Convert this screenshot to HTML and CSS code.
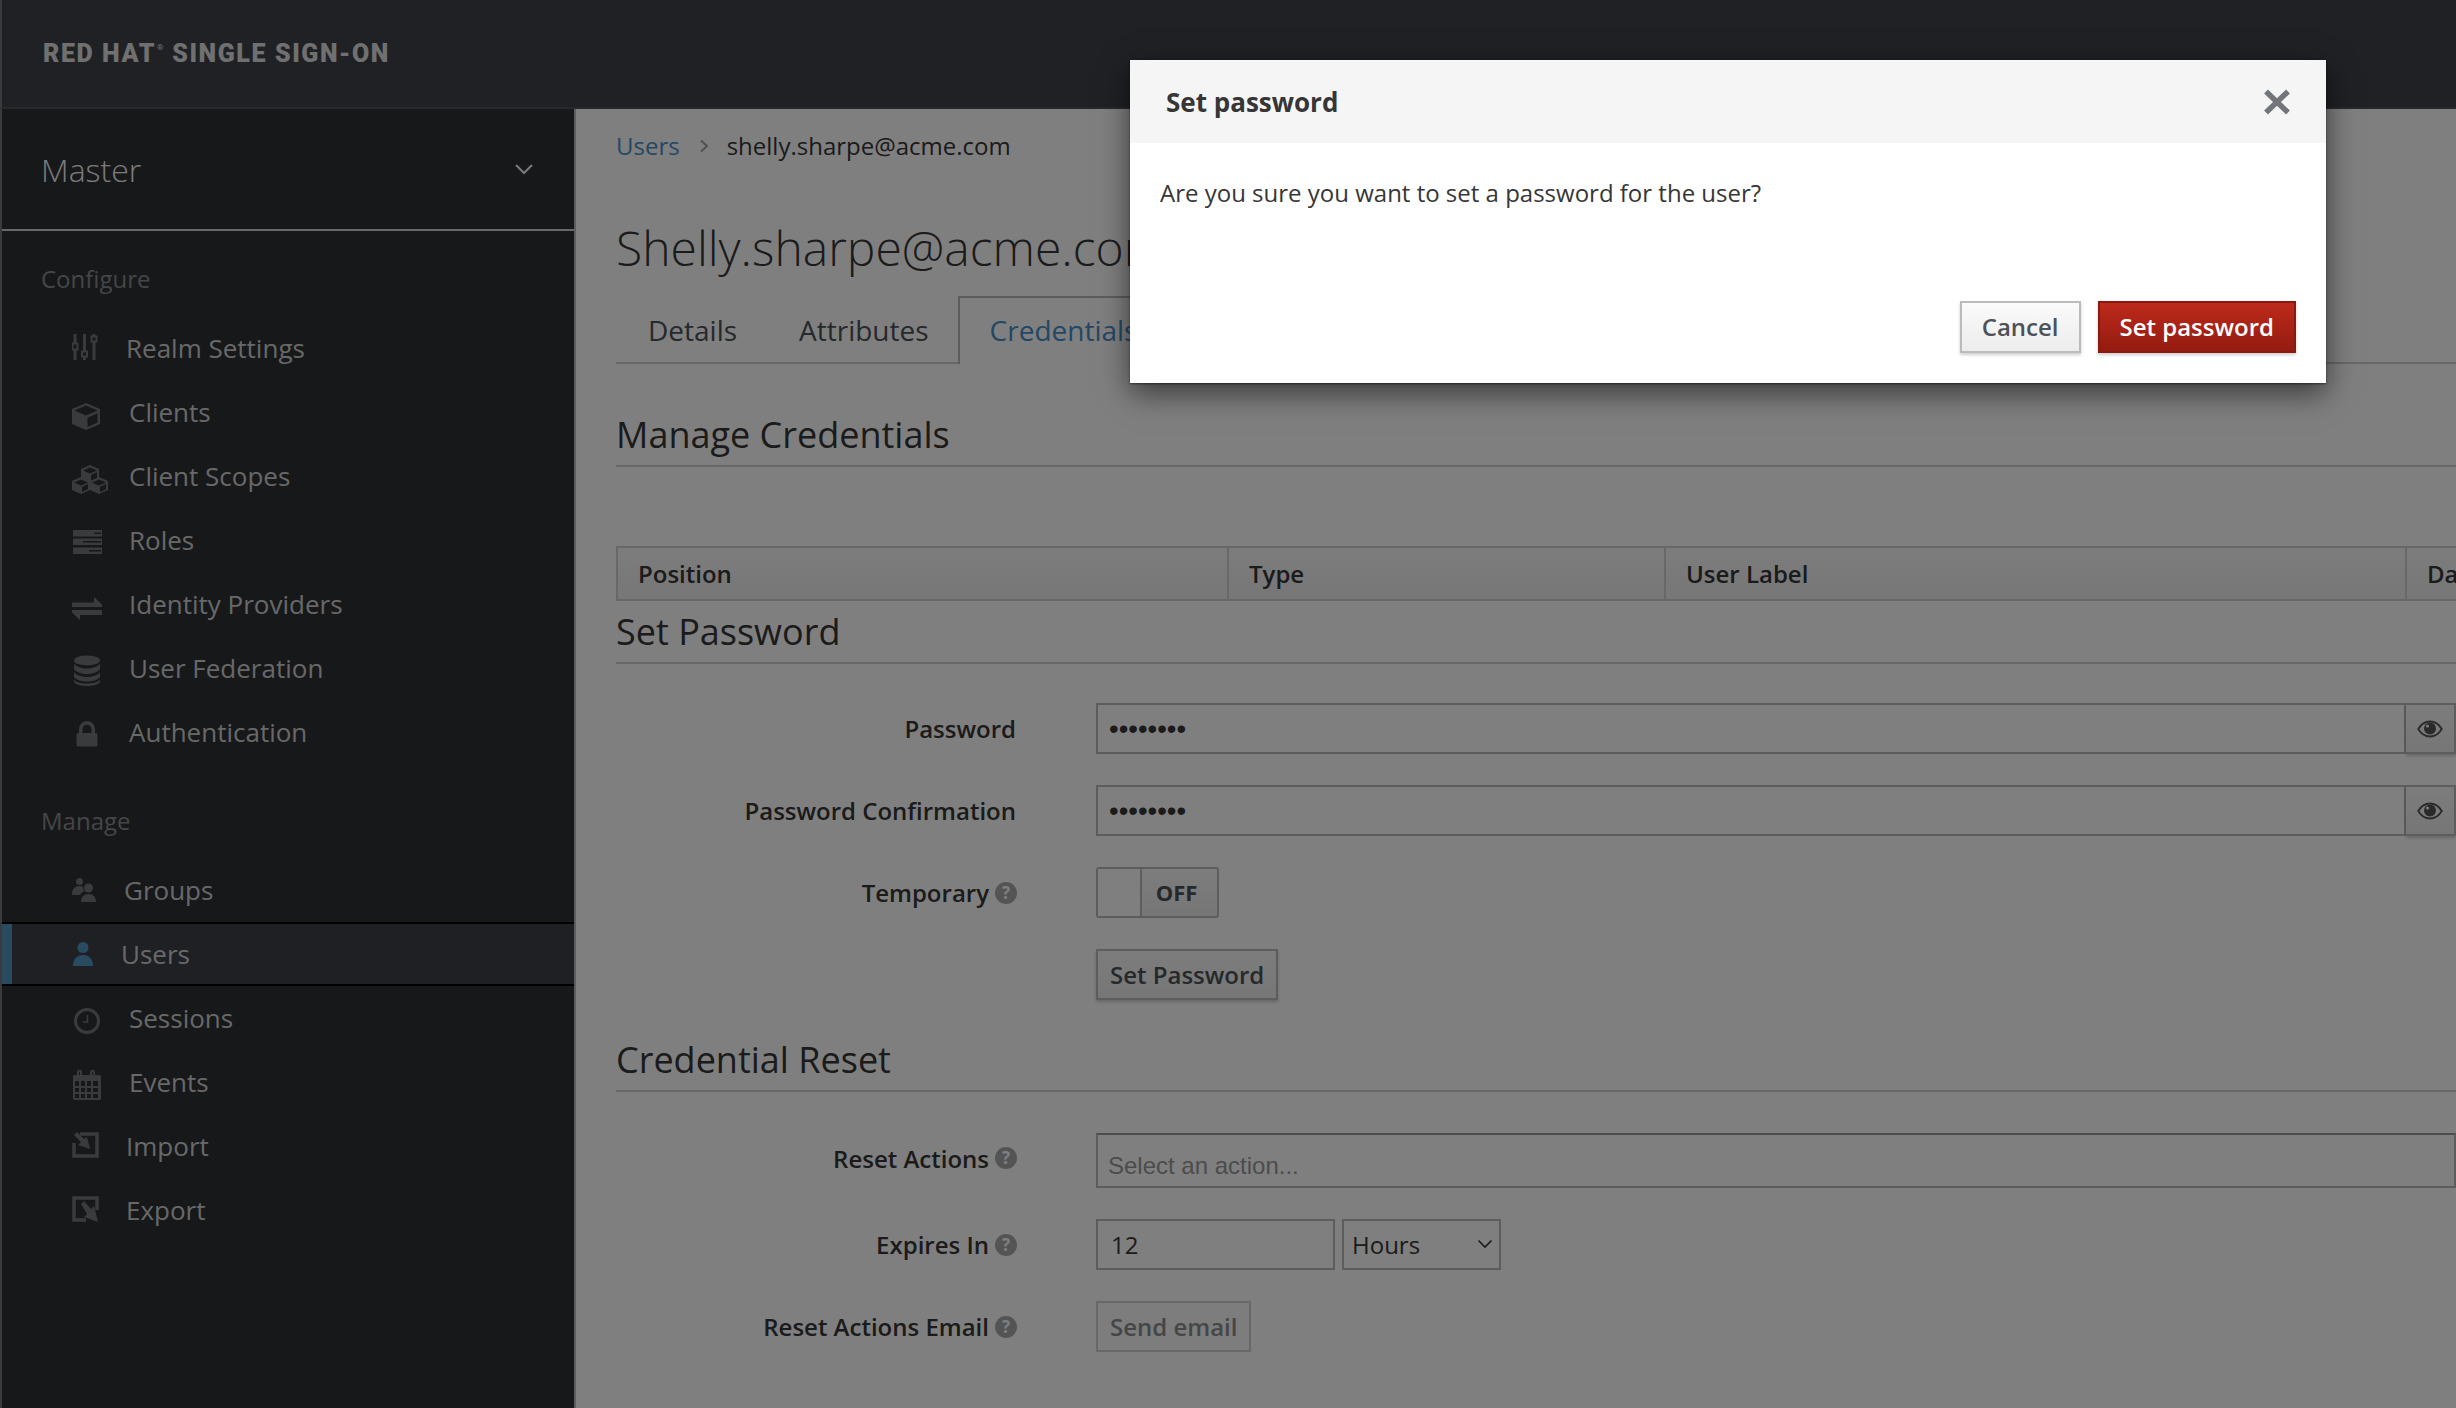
FILE: index.html
```html
<!DOCTYPE html>
<html lang="en">
<head>
<meta charset="utf-8">
<title>Set password</title>
<link rel="stylesheet" href="styles.css">
</head>
<body>
<div class="page">
  <header class="topbar"><span class="brand">RED HAT<sup class="reg">®</sup> SINGLE SIGN-ON</span></header>
  <div class="shell">
    <aside class="sidebar">
      <div class="realm"><span>Master</span>
        <svg class="realm-chevron" width="20" height="12" viewBox="0 0 20 12"><path d="M2 2l8 8 8-8" fill="none" stroke="currentColor" stroke-width="2"/></svg>
      </div>
      <div class="nav-title nav-title-first">Configure</div>
      <ul class="nav">
        <li class="nav-item t54"><svg class="ico" viewBox="0 0 40 40"><path d="M3 6v9M3 22v10M12.500 6v17M12.500 29v3M22 6v2M22 14v18" stroke="currentColor" stroke-width="3"/><path d="M0.500 15.500h5v6h-5zM10 23.500h5v5h-5zM19.500 8.500h5v5h-5z" fill="none" stroke="currentColor" stroke-width="2"/></svg><span>Realm Settings</span></li>
        <li class="nav-item"><svg class="ico" viewBox="0 0 40 40"><path id="cube" d="M14 11L28 17V32L14 38L0 32V17ZM2.500 18.500L14 23.500L25.500 18.500L14 13.500ZM15.500 25.700V35L25.500 30.500V21.200ZM2 20V30.500L12.500 35V25Z" fill="currentColor" fill-rule="evenodd"/><path d="M1 19L13 24V36L1 31Z" fill="currentColor"/></svg><span>Clients</span></li>
        <li class="nav-item"><svg class="ico" viewBox="0 0 40 40"><g fill="currentColor" fill-rule="evenodd"><path d="M18 9L27 13V23L18 27L9 23V13ZM11 14.500L18 17.500L25 14.500L18 11.500ZM19 19V25L25 22V16Z"/><path d="M9 21L18 25V34L9 38L0 34V25ZM2 26.500L9 29.500L16 26.500L9 23.500ZM10 31V36L16 33V28Z"/><path d="M27 21L36 25V34L27 38L18 34V25ZM20 26.500L27 29.500L34 26.500L27 23.500ZM28 31V36L34 33V28Z"/></g></svg><span>Client Scopes</span></li>
        <li class="nav-item"><svg class="ico" viewBox="0 0 40 40"><path fill="currentColor" fill-rule="evenodd" d="M1 10H30V16.500H1ZM22 12.500V14H29V12.500ZM1 18.500H30V25H1ZM11 21V22.500H29V21ZM1 27.500H30V34H1ZM17 30V31.500H29V30Z"/></svg><span>Roles</span></li>
        <li class="nav-item"><svg class="ico" viewBox="0 0 40 40"><path fill="currentColor" d="M0 18.500H22V13L30 20.500V23H0ZM30 26V31H8V36L0 28.500V26Z"/></svg><span>Identity Providers</span></li>
        <li class="nav-item"><svg class="ico" viewBox="0 0 40 40"><g fill="currentColor"><ellipse cx="15" cy="12.500" rx="13" ry="5"/><path d="M2 15.500C4 19 10 20.500 15 20.500S26 19 28 15.500V21C26 24.500 20 26 15 26S4 24.500 2 21Z"/><path d="M2 24C4 27.500 10 29 15 29S26 27.500 28 24V29C26 32 20 33.500 15 33.500S4 32 2 29Z"/><path d="M2 31.500C4 34.500 10 35.500 15 35.500S26 34.500 28 31.500V34C26 37 20 38 15 38S4 37 2 34Z"/></g></svg><span>User Federation</span></li>
        <li class="nav-item"><svg class="ico" viewBox="0 0 40 40"><path fill="currentColor" fill-rule="evenodd" d="M7 21V18C7 6 23 6 23 18V21H24A1.500 1.500 0 0 1 25.500 22.500V33A1.500 1.500 0 0 1 24 34.500H6A1.500 1.500 0 0 1 4.500 33V22.500A1.500 1.500 0 0 1 6 21ZM10.500 21H19.500V18C19.500 11 10.500 11 10.500 18Z"/></svg><span>Authentication</span></li>
      </ul>
      <div class="nav-title nav-title-second">Manage</div>
      <ul class="nav">
        <li class="nav-item t52"><svg class="ico" viewBox="0 0 40 40"><g fill="currentColor"><circle cx="7.500" cy="11.500" r="3.500"/><path d="M0 24C0 19 3 16 7.500 16C9 16 10 16.300 11 17C11 19 11.500 20 12.500 21C10.500 22 9 23 8 25H0Z"/><circle cx="16.500" cy="18" r="4.500"/><path d="M9 32C9 27 12 24 16.500 24S24 27 24 32Z"/></g></svg><span>Groups</span></li>
        <li class="nav-item is-active t49"><svg class="ico" viewBox="0 0 40 40"><g fill="currentColor"><circle cx="11" cy="13.500" r="5.500"/><path d="M1 32C1 25 5 21 11 21S21 25 21 32Z"/></g></svg><span>Users</span></li>
        <li class="nav-item"><svg class="ico" viewBox="0 0 40 40"><circle cx="15" cy="23" r="11.500" fill="none" stroke="currentColor" stroke-width="3"/><path d="M15.500 17V24H11" fill="none" stroke="currentColor" stroke-width="1.500"/></svg><span>Sessions</span></li>
        <li class="nav-item"><svg class="ico" viewBox="0 0 40 40"><path fill="currentColor" fill-rule="evenodd" d="M2 13H5V10C5 7 10 7 10 10V13H18V10C18 7 23 7 23 10V13H27A2 2 0 0 1 29 15V36A2 2 0 0 1 27 38H3A2 2 0 0 1 1 36V15A2 2 0 0 1 2 13ZM7 13H8V10C8 9 7 9 7 10ZM20 13H21V10C21 9 20 9 20 10ZM3 19V24H7V19ZM9 19V24H13V19ZM15 19V24H19V19ZM21 19V24H26V19ZM3 26V30H7V26ZM9 26V30H13V26ZM15 26V30H19V26ZM21 26V30H26V26ZM3 32V36H7V32ZM9 32V36H13V32ZM15 32V36H19V32ZM21 32V36H26V32Z"/></svg><span>Events</span></li>
        <li class="nav-item t54"><svg class="ico" viewBox="0 0 40 40"><path fill="none" stroke="currentColor" stroke-width="3.500" d="M8 8H25V30H2V17"/><path fill="currentColor" d="M5 6L2 9L9 16L6 19L18 23L15 11L12 13Z"/></svg><span>Import</span></li>
        <li class="nav-item t54"><svg class="ico" viewBox="0 0 40 40"><path fill="none" stroke="currentColor" stroke-width="3.500" d="M25 20V8H2V30H14"/><path fill="currentColor" d="M9 14L12 11L19 19L22 16L26 32L12 27L15 24Z"/></svg><span>Export</span></li>
      </ul>
    </aside>
    <main class="content">
      <nav class="crumbs"><a class="link">Users</a><svg class="crumb-sep" width="10" height="14" viewBox="0 0 10 14"><path d="M2 1.500l6 5.500-6 5.500" fill="none" stroke="currentColor" stroke-width="1.800"/></svg><span>shelly.sharpe@acme.com</span></nav>
      <h1 class="title">Shelly.sharpe@acme.com</h1>
      <ul class="tabs">
        <li class="tab">Details</li>
        <li class="tab">Attributes</li>
        <li class="tab is-current">Credentials</li>
        <li class="tab">Role Mappings</li>
      </ul>
      <h2 class="section section-manage">Manage Credentials</h2>
      <table class="cred-table">
        <thead><tr><th class="c-pos">Position</th><th class="c-type">Type</th><th class="c-label">User Label</th><th class="c-date">Data</th></tr></thead>
      </table>
      <h2 class="section">Set Password</h2>
      <form class="form">
        <div class="row"><label class="lbl">Password</label><div class="group"><input class="input grow pw" type="password" value="password"><button type="button" class="eye"><svg width="26" height="18" viewBox="0 0 26 18"><path d="M13 1.500C7 1.500 3 6 1.200 9C3 12 7 16.500 13 16.500S23 12 24.800 9C23 6 19 1.500 13 1.500Z" fill="none" stroke="currentColor" stroke-width="1.800"/><circle cx="13" cy="8.500" r="6" fill="currentColor"/><circle cx="10.500" cy="6" r="1.500" fill="#fff"/></svg></button></div></div>
        <div class="row"><label class="lbl">Password Confirmation</label><div class="group"><input class="input grow pw" type="password" value="password"><button type="button" class="eye"><svg width="26" height="18" viewBox="0 0 26 18"><path d="M13 1.500C7 1.500 3 6 1.200 9C3 12 7 16.500 13 16.500S23 12 24.800 9C23 6 19 1.500 13 1.500Z" fill="none" stroke="currentColor" stroke-width="1.800"/><circle cx="13" cy="8.500" r="6" fill="currentColor"/><circle cx="10.500" cy="6" r="1.500" fill="#fff"/></svg></button></div></div>
        <div class="row"><label class="lbl">Temporary<i class="help">?</i></label><div class="toggle"><span class="knob"></span><span class="off">OFF</span></div></div>
        <div class="row"><span class="lbl"></span><div><button type="button" class="btn">Set Password</button></div></div>
      </form>
      <h2 class="section section-reset">Credential Reset</h2>
      <form class="form form-reset">
        <div class="row row-tall"><label class="lbl">Reset Actions<i class="help">?</i></label><input class="input grow multi" placeholder="Select an action..."></div>
        <div class="row"><label class="lbl">Expires In<i class="help">?</i></label><div class="expires"><input class="input num" value="12"><span class="select-wrap"><select class="select"><option>Hours</option></select><svg class="select-arrow" width="16" height="10" viewBox="0 0 16 10"><path d="M1.500 1.500L8 8l6.500-6.500" fill="none" stroke="currentColor" stroke-width="1.600"/></svg></span></div></div>
        <div class="row"><label class="lbl">Reset Actions Email<i class="help">?</i></label><div><button type="button" class="btn is-disabled">Send email</button></div></div>
      </form>
    </main>
  </div>
</div>
<div class="backdrop"></div>
<section class="modal">
  <div class="modal-head"><h3 class="modal-title">Set password</h3>
    <svg class="modal-close" width="28" height="26" viewBox="0 0 28 26"><path d="M3 2.500L25 23.500M25 2.500L3 23.500" stroke="currentColor" stroke-width="5.500"/></svg>
  </div>
  <div class="modal-body">Are you sure you want to set a password for the user?</div>
  <div class="modal-foot"><button type="button" class="mbtn">Cancel</button><button type="button" class="mbtn mbtn-danger">Set password</button></div>
</section>
</body>
</html>
```
FILE: styles.css
```css
* { box-sizing: border-box; }
html, body { margin: 0; height: 100%; }
body { width: 2456px; height: 1408px; overflow: hidden; position: relative; font-family: "Open Sans", "Liberation Sans", sans-serif; font-size: 24px; color: #363636; background: #fff; }
.page { height: 1408px; display: flex; flex-direction: column; }
.topbar { height: 109px; flex: none; background: #3e424a; border-left: 2px solid #777; border-bottom: 2px solid #4f535a; display: flex; align-items: center; padding-left: 41px; }
.brand { font-family: Roboto, "Liberation Sans", sans-serif; font-weight: 900; font-size: 25px; letter-spacing: 1.6px; color: #e0e0e0; white-space: nowrap; }
.reg { font-size: 8px; font-weight: 400; vertical-align: 12px; line-height: 0; letter-spacing: 0; margin: 0 1px; }
.shell { flex: 1; display: flex; min-height: 0; }
.sidebar { width: 576px; flex: none; background: #2d3034; border-left: 2px solid #777; border-right: 2px solid #bbb; color: #d1d1d1; }
.realm { height: 122px; border-bottom: 2px solid #d1d1d1; display: flex; align-items: center; justify-content: space-between; padding: 0 40px 0 39px; font-size: 32px; font-weight: 300; color: #f5f5f5; }
.realm-chevron { color: #f5f5f5; }
.nav-title { font-size: 24px; color: #8b8d8f; padding-left: 39px; line-height: 34px; }
.nav-title-first { margin-top: 31px; }
.nav-title-second { margin-top: 40px; }
.nav { list-style: none; margin: 0; padding: 0; }
.nav-title + .nav { margin-top: 20px; }
.nav-item { height: 64px; display: flex; align-items: center; padding-left: 70px; white-space: nowrap; font-size: 26px; }
.nav-item .ico { width: 40px; height: 40px; flex: none; color: #72767b; margin-right: 17px; }
.nav-item.t54 .ico { margin-right: 14px; }
.nav-item.t52 .ico { margin-right: 12px; }
.nav-item.t49 .ico { margin-right: 9px; }
.nav-item.is-active { background: #3e4146; box-shadow: inset 0 2px 0 #000, inset 0 -2px 0 #000; position: relative; }
.nav-item.is-active::before { content: ""; position: absolute; left: 0; top: 2px; bottom: 2px; width: 10px; background: #5096c4; }
.nav-item.is-active .ico { color: #5096c4; }
.content { flex: 1; min-width: 0; overflow: hidden; padding: 20px 0 0 40px; }
.crumbs { height: 33px; display: flex; align-items: center; white-space: nowrap; }
.link { color: #4690cc; }
.crumb-sep { margin: 0 18px 0 19px; color: #9c9c9c; }
.title { margin: 51px 0 0; height: 70px; line-height: 70px; font-size: 48px; font-weight: 300; white-space: nowrap; }
.tabs { list-style: none; margin: 13px 0 0; padding: 0; height: 68px; display: flex; border-bottom: 2px solid #d1d1d1; white-space: nowrap; }
.tab { height: 68px; padding: 0 31px; line-height: 68px; font-size: 28px; color: #4d5258; }
.tab:first-child { padding-left: 32px; }
.tab:nth-child(2) { padding-right: 29px; }
.tab.is-current { color: #4690cc; border: 2px solid #bbb; border-bottom: 0; background: #fff; padding: 0 30px; line-height: 65px; }
.section { margin: 0; height: 63px; line-height: 61px; font-size: 36px; font-weight: 400; border-bottom: 2px solid #d1d1d1; white-space: nowrap; }
.section-manage { margin-top: 40px; }
.section-reset { margin-top: 29px; }
.cred-table { margin-top: 79px; width: 1880px; height: 52px; border-collapse: collapse; table-layout: fixed; }
.cred-table th { height: 53px; text-align: left; padding: 0 20px; font-weight: 600; font-size: 24px; border: 2px solid #d1d1d1; background: linear-gradient(#fafafa, #ededed); white-space: nowrap; }
.c-pos { width: 611px; } .c-type { width: 437px; } .c-label { width: 741px; } .c-date { width: 91px; }
.form { margin-top: 39px; display: grid; row-gap: 31px; }
.form-reset { margin-top: 41px; }
.row { display: grid; grid-template-columns: 400px 1fr; column-gap: 80px; align-items: center; min-height: 51px; }
.lbl { text-align: right; font-weight: 600; font-size: 24px; white-space: nowrap; display: flex; justify-content: flex-end; align-items: center; }
.help { width: 22px; height: 22px; border-radius: 50%; background: #a8a8a8; color: #fff; font-style: normal; font-weight: 700; font-size: 17px; line-height: 22px; text-align: center; margin: 0 -1px 0 6px; }
.group { display: flex; height: 51px; }
.input { height: 51px; border: 2px solid #bbb; padding: 0 13px; font: 24px "Open Sans", sans-serif; color: #363636; background: #fff; outline: 0; border-radius: 0; min-width: 0; }
.pw { font: 27.500px "Liberation Sans", sans-serif; padding: 0 11px; }
.grow { flex: 1; width: 100%; }
.row-tall { min-height: 55px; }
.row-tall .lbl { margin-bottom: 5px; }
.multi { height: 55px; padding: 10px 10px 0; font: 24px "Liberation Sans", sans-serif; border-top-color: #999; }
.multi::placeholder { color: #999; opacity: 1; }
.eye { width: 50px; height: 51px; flex: none; padding: 0; border: 2px solid #bbb; border-left: 0; background: linear-gradient(#fafafa, #ededed); color: #555; display: flex; align-items: center; justify-content: center; margin-left: 0; box-shadow: 0 2px 3px rgba(3,3,3,.2); }
.toggle { width: 123px; height: 51px; border: 2px solid #bbb; border-radius: 3px; display: flex; background: linear-gradient(#fafafa, #ededed); }
.knob { width: 44px; border-right: 2px solid #bbb; background: #fff; }
.off { flex: 1; padding-right: 6px; text-align: center; line-height: 47px; font-weight: 700; font-size: 22px; color: #4d5258; }
.btn { height: 51px; padding: 0 12px; border: 2px solid #bbb; background: linear-gradient(#fafafa, #ededed); font: 600 24px "Open Sans", sans-serif; color: #4d5258; box-shadow: 0 2px 3px rgba(3,3,3,.2); white-space: nowrap; }
.btn.is-disabled { background: #fafafa; color: #8b8d8f; box-shadow: none; border-color: #d1d1d1; }
.expires { display: flex; gap: 7px; }
.num { width: 239px; }
.select-wrap { position: relative; display: block; width: 159px; height: 51px; }
.select { width: 100%; height: 100%; appearance: none; -webkit-appearance: none; border: 2px solid #bbb; background: #fff; padding: 0 8px; font: 24px "Open Sans", sans-serif; color: #363636; border-radius: 0; }
.select-arrow { position: absolute; right: 8px; top: 20px; color: #363636; }
.backdrop { position: absolute; inset: 0; background: rgba(0,0,0,.5); }
.modal { position: absolute; left: 1130px; top: 60px; width: 1196px; height: 323px; background: #fff; display: flex; flex-direction: column; box-shadow: 0 10px 28px rgba(0,0,0,.55), 0 1px 2px rgba(0,0,0,.5); }
.modal-head { height: 83px; flex: none; background: #f5f5f5; display: flex; align-items: center; justify-content: space-between; padding: 0 35px 0 36px; }
.modal-title { margin: 0; font-size: 26px; font-weight: 700; color: #363636; }
.modal-close { color: #72767b; }
.modal-body { flex: 1; padding: 30px 0 0 30px; line-height: 40px; color: #363636; }
.modal-foot { display: flex; justify-content: flex-end; gap: 17px; padding: 0 30px 30px 0; }
.mbtn { height: 52px; padding: 0 20px 2px; border: 2px solid #bbb; background: linear-gradient(#fafafa, #ededed); font: 600 24px "Open Sans", sans-serif; color: #4d5258; box-shadow: 0 2px 3px rgba(3,3,3,.2); }
.mbtn-danger { background: linear-gradient(#bc2a1b, #951b10); border-color: #8a1a10; color: #fff; }
```
